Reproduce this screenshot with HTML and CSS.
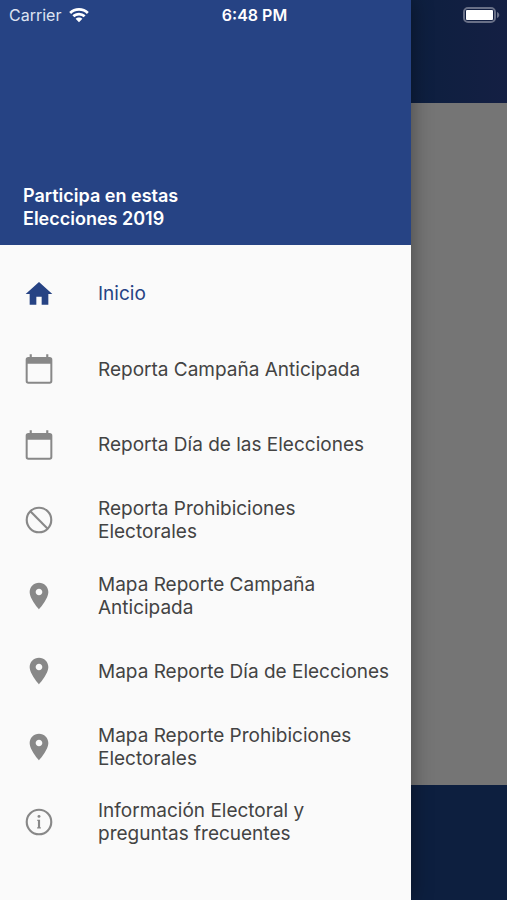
FILE: index.html
```html
<!DOCTYPE html>
<html lang="es">
<head>
<meta charset="utf-8">
<meta name="viewport" content="width=device-width, initial-scale=1">
<title>Elecciones 2019</title>
<link rel="stylesheet" href="styles.css">
</head>
<body>
<svg class="symbols" aria-hidden="true">
  <symbol id="home" viewBox="0 0 24 24"><path d="M10 20v-6h4v6h5v-8h3L12 3 2 12h3v8z"/></symbol>
  <symbol id="calendar" viewBox="0 0 24 24"><rect x="2.750" y="3.750" width="18.500" height="18.500" rx="1.300" fill="none" stroke="currentColor" stroke-width="1.500"/><path d="M3 4h18v4H3zM5 1h1.600v3H5zM17.400 1H19v3h-1.600z"/></symbol>
  <symbol id="block" viewBox="0 0 24 24"><g fill="none" stroke="currentColor" stroke-width="1.600"><circle cx="12" cy="12" r="9.200"/><path d="M5.500 5.500l13 13"/></g></symbol>
  <symbol id="pin" viewBox="0 0 24 24"><path d="M12 2C8.130 2 5 5.130 5 9c0 5.250 7 13 7 13s7-7.750 7-13c0-3.870-3.130-7-7-7zm0 9.500c-1.380 0-2.500-1.120-2.500-2.500s1.120-2.500 2.500-2.500 2.500 1.120 2.500 2.500-1.120 2.500-2.500 2.500z"/></symbol>
  <symbol id="info" viewBox="0 0 24 24"><circle cx="12" cy="12" r="9.200" fill="none" stroke="currentColor" stroke-width="1.600"/><circle cx="12" cy="7.800" r="1.100"/><path d="M10.700 10.400h2.100v5.600h.6v.8h-2.800V16h.6v-4.800h-.5z"/></symbol>
</svg>

<div class="app">
  <header class="status">
    <span class="carrier">Carrier
      <svg class="wifi" viewBox="0 0 20 15" role="img" aria-label="Wi-Fi"><path d="M10 0C6.200 0 2.700 1.500.2 4l1.900 2a11.300 11.300 0 0 1 15.800 0l1.900-2A14 14 0 0 0 10 0zM10 4.700c-2.600 0-4.900 1-6.600 2.600l1.900 2a6.800 6.800 0 0 1 9.400 0l1.900-2A9.600 9.600 0 0 0 10 4.700zM10 9.400c-1.300 0-2.500.5-3.400 1.300L10 14.300l3.400-3.600c-.9-.8-2.100-1.300-3.400-1.300z"/></svg>
    </span>
    <time class="clock">6:48 PM</time>
    <svg class="battery" viewBox="0 0 37 16" role="img" aria-label="Batería"><rect class="shell" x="1" y="1" width="31" height="14" rx="4"/><rect x="3" y="3" width="27" height="10" rx="1"/><path class="tip" d="M34 5c3 1 3 5 0 6z"/></svg>
  </header>

  <aside class="drawer">
    <h1 class="banner">Participa en estas<br>Elecciones 2019</h1>
    <nav class="menu">
      <a class="item active" href="#inicio" aria-current="page"><svg class="icon"><use href="#home"/></svg><span>Inicio</span></a>
      <a class="item" href="#campana"><svg class="icon"><use href="#calendar"/></svg><span>Reporta Campaña Anticipada</span></a>
      <a class="item" href="#dia"><svg class="icon"><use href="#calendar"/></svg><span>Reporta Día de las Elecciones</span></a>
      <a class="item" href="#prohibiciones"><svg class="icon"><use href="#block"/></svg><span>Reporta Prohibiciones Electorales</span></a>
      <a class="item" href="#mapa-campana"><svg class="icon"><use href="#pin"/></svg><span>Mapa Reporte Campaña Anticipada</span></a>
      <a class="item" href="#mapa-dia"><svg class="icon"><use href="#pin"/></svg><span>Mapa Reporte Día de Elecciones</span></a>
      <a class="item" href="#mapa-prohibiciones"><svg class="icon"><use href="#pin"/></svg><span>Mapa Reporte Prohibiciones Electorales</span></a>
      <a class="item" href="#informacion"><svg class="icon"><use href="#info"/></svg><span>Información Electoral y preguntas frecuentes</span></a>
    </nav>
  </aside>

  <main class="page">
    <div class="page-top"></div>
    <div class="page-body"></div>
    <div class="page-bottom"></div>
  </main>
</div>
</body>
</html>
```
FILE: styles.css
```css
* { box-sizing: border-box; }

body {
  margin: 0;
  font-family: Inter, "Liberation Sans", sans-serif;
}

.symbols {
  position: absolute;
  width: 0;
  height: 0;
}

.app {
  position: relative;
  display: grid;
  grid-template-columns: 81% 1fr;
  min-height: 100vh;
}

/* Status bar, laid over the drawer and the page */
.status {
  position: absolute;
  top: 0;
  left: 0;
  right: 0;
  z-index: 2;
  display: grid;
  grid-template-columns: 1fr auto 1fr;
  align-items: center;
  height: 30px;
  padding: 0 7px 0 9px;
  color: #fff;
  font-size: 16px;
  line-height: 20px;
}

.carrier {
  display: flex;
  align-items: center;
  gap: 8px;
  color: #dde3f2;
}

.wifi {
  width: 20px;
  height: 15px;
  fill: #fff;
}

.clock { font-weight: 600; }

.battery {
  justify-self: end;
  width: 37px;
  height: 16px;
  fill: #fff;
}

.shell {
  fill: none;
  stroke: #697087;
  stroke-width: 2;
}

.tip { fill: #697087; }

.drawer {
  z-index: 1;
  display: flex;
  flex-direction: column;
  background: #fafafa;
  box-shadow: 0 0 20px rgba(0, 0, 0, 0.4);
}

.banner {
  display: flex;
  align-items: flex-end;
  min-height: 245px;
  margin: 0;
  padding: 0 23px 15px;
  background: #264384;
  color: #fff;
  font-size: 18px;
  font-weight: 600;
  line-height: 23px;
}

.menu {
  flex: 1;
  display: grid;
  grid-auto-rows: 1fr;
  padding: 11px 16px 40px 23px;
}

.item {
  display: grid;
  grid-template-columns: 32px 1fr;
  align-items: center;
  gap: 43px;
  color: #434343;
  font-size: 19px;
  line-height: 23px;
  text-decoration: none;
}

.icon {
  width: 32px;
  height: 32px;
  color: #888;
  fill: currentColor;
}

.active,
.active .icon { color: #264384; }

.page {
  display: flex;
  flex-direction: column;
}

.page-top {
  height: 103px;
  background: linear-gradient(90deg, #0d1f3f, #141f43);
}

.page-body {
  flex: 1;
  background: #757575;
}

.page-bottom {
  height: 115px;
  background: #0d1f3f;
}
```
